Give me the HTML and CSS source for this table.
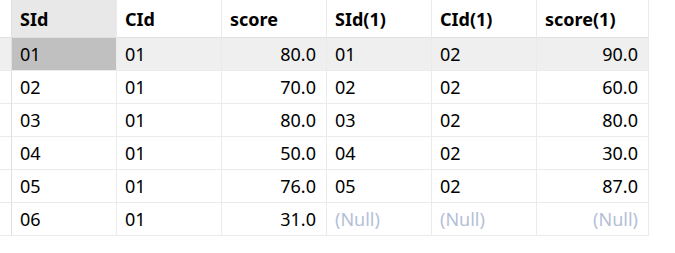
FILE: index.html
```html
<!DOCTYPE html>
<html>
<head>
<meta charset="utf-8">
<link rel="stylesheet" href="styles.css">
</head>
<body>
<div class="grid">
  <div class="c rh hdr"></div>
  <div class="c hdr sel-col">SId</div>
  <div class="c hdr">CId</div>
  <div class="c hdr">score</div>
  <div class="c hdr">SId(1)</div>
  <div class="c hdr">CId(1)</div>
  <div class="c hdr">score(1)</div>

  <div class="c rh cur"></div>
  <div class="c cur focus">01</div>
  <div class="c cur">01</div>
  <div class="c cur num">80.0</div>
  <div class="c cur">01</div>
  <div class="c cur">02</div>
  <div class="c cur num">90.0</div>

  <div class="c rh"></div>
  <div class="c">02</div>
  <div class="c">01</div>
  <div class="c num">70.0</div>
  <div class="c">02</div>
  <div class="c">02</div>
  <div class="c num">60.0</div>

  <div class="c rh"></div>
  <div class="c">03</div>
  <div class="c">01</div>
  <div class="c num">80.0</div>
  <div class="c">03</div>
  <div class="c">02</div>
  <div class="c num">80.0</div>

  <div class="c rh"></div>
  <div class="c">04</div>
  <div class="c">01</div>
  <div class="c num">50.0</div>
  <div class="c">04</div>
  <div class="c">02</div>
  <div class="c num">30.0</div>

  <div class="c rh"></div>
  <div class="c">05</div>
  <div class="c">01</div>
  <div class="c num">76.0</div>
  <div class="c">05</div>
  <div class="c">02</div>
  <div class="c num">87.0</div>

  <div class="c rh"></div>
  <div class="c">06</div>
  <div class="c">01</div>
  <div class="c num">31.0</div>
  <div class="c null">(Null)</div>
  <div class="c null">(Null)</div>
  <div class="c num null">(Null)</div>
</div>
</body>
</html>
```

FILE: styles.css
```css
html, body {
  margin: 0;
  padding: 0;
  background: #ffffff;
}
.grid {
  display: grid;
  grid-template-columns: 12px 105px 105px 105px 105px 105px 112px;
  grid-template-rows: 38px repeat(6, 33px);
  width: max-content;
  font-family: "Noto Sans", "Open Sans", sans-serif;
  font-size: 18px;
  color: #000000;
}
.c {
  box-sizing: border-box;
  border-right: 1px solid #ebebeb;
  border-bottom: 1px solid #ebebeb;
  padding: 0 10px 0 8px;
  display: flex;
  align-items: center;
  white-space: nowrap;
  overflow: hidden;
}
.rh {
  padding: 0;
  border-right-color: #e0e0e0;
}
.hdr {
  font-weight: bold;
  border-bottom-color: #e0e0e0;
}
.sel-col {
  background: #e8e8e8;
}
.cur {
  background: #efefef;
}
.focus {
  background: #c0c0c0;
}
.num {
  justify-content: flex-end;
}
.null {
  color: #b4bfd6;
}
```
